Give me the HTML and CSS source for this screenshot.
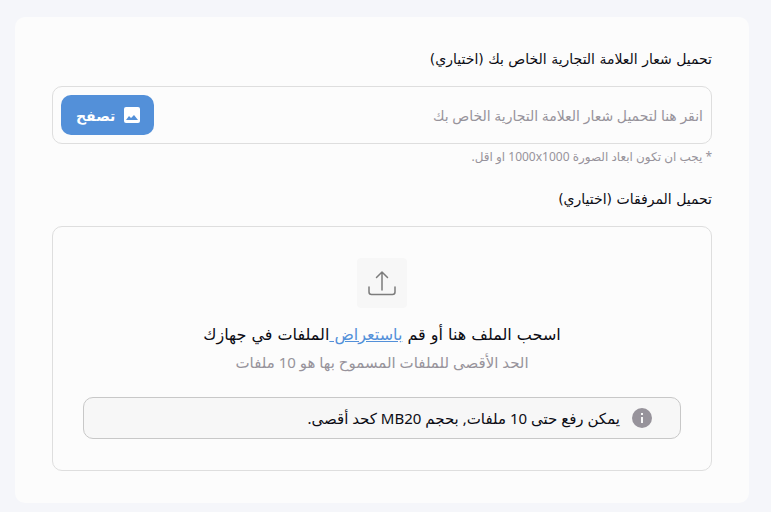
FILE: index.html
```html
<!DOCTYPE html>
<html lang="ar" dir="rtl">
<head>
<meta charset="utf-8">
<title>تحميل الملفات</title>
<link rel="stylesheet" href="styles.css">
</head>
<body>
<form class="card">
  <label class="label" for="logo">تحميل شعار العلامة التجارية الخاص بك (اختياري)</label>
  <div class="field">
    <input class="field-input" id="logo" type="text" readonly placeholder="انقر هنا لتحميل شعار العلامة التجارية الخاص بك">
    <button class="browse" type="button">
      <svg class="browse-icon" viewBox="0 0 16 16" aria-hidden="true"><rect width="16" height="16" rx="2" fill="currentColor"/><path class="hills" d="M2 13l3-4 2 2 3-3 4 5z"/></svg>
      <span>تصفح</span>
    </button>
  </div>
  <p class="hint">* يجب ان تكون ابعاد الصورة 1000x1000 او اقل.</p>
  <h2 class="label">تحميل المرفقات (اختياري)</h2>
  <section class="drop">
    <div class="upload">
      <svg class="upload-icon" viewBox="0 0 28 26" aria-hidden="true"><path d="M14 20V2M8.500 7.500L14 2l5.500 5.500M1 17v5q0 2.500 2.500 2.500h21q2.500 0 2.500-2.500v-5"/></svg>
    </div>
    <p class="title">اسحب الملف هنا أو قم <a class="link" href="#">باستعراض </a>الملفات في جهازك</p>
    <p class="limit">الحد الأقصى للملفات المسموح بها هو 10 ملفات</p>
    <div class="notice">
      <svg class="info" viewBox="0 0 20 20" aria-hidden="true"><circle cx="10" cy="10" r="10"/><path d="M9 9h2v6H9zM9 5h2v2H9z"/></svg>
      <span>يمكن رفع حتى 10 ملفات, بحجم MB20 كحد أقصى.</span>
    </div>
  </section>
</form>
</body>
</html>
```
FILE: styles.css
```css
* { box-sizing: border-box; }
body { margin: 0; padding: 17px 22px 9px 15px; background: #f5f6fa; color: #0c0c14; font-family: "Noto Sans", "DejaVu Sans", sans-serif; }
.card { padding: 31px 37px 32px; border-radius: 10px; background: #fcfcfc; }
.label, .title { font-family: "DejaVu Sans", sans-serif; }
.label { display: block; margin: 0; font-size: 14px; font-weight: 400; line-height: 22px; }
.field { display: flex; align-items: center; margin-top: 16px; padding: 8px; border: 1px solid #dedede; border-radius: 10px; }
.field-input { flex: 1; min-width: 0; padding: 0; border: 0; background: none; font: inherit; font-size: 14px; }
.field-input::placeholder { color: #97939b; opacity: 1; }
.browse { display: flex; align-items: center; gap: 9px; height: 40px; padding: 0 14px 0 15px; border: 0; border-radius: 10px; background: #5390d9; color: #fff; font: inherit; font-size: 14px; font-weight: 700; }
.browse-icon { width: 16px; height: 16px; }
.hills { fill: #5390d9; }
.hint { margin: 4px 0 22px; color: #97939b; font-size: 12px; line-height: 18px; }
.drop { display: flex; flex-direction: column; align-items: center; margin-top: 16px; padding: 31px 30px; border: 1px solid #dedede; border-radius: 10px; }
.upload { display: grid; place-items: center; width: 50px; height: 50px; border-radius: 4px; background: #f7f7f7; }
.upload-icon { width: 28px; fill: none; stroke: #7c7c7c; stroke-width: 1.5; stroke-linecap: round; }
.title { margin: 14px 0 0; font-size: 16px; line-height: 26px; }
.link { color: #5390d9; }
.limit { margin: 3px 0 0; color: #97939b; font-size: 15px; line-height: 22px; }
.notice { display: flex; align-items: center; gap: 12px; align-self: stretch; margin-top: 24px; padding: 7px 28px; border: 1px solid #c8c8c8; border-radius: 10px; background: #f7f7f7; font-size: 15px; line-height: 26px; }
.info { width: 20px; height: 20px; fill: #97939b; }
.info path { fill: #f7f7f7; }
```
